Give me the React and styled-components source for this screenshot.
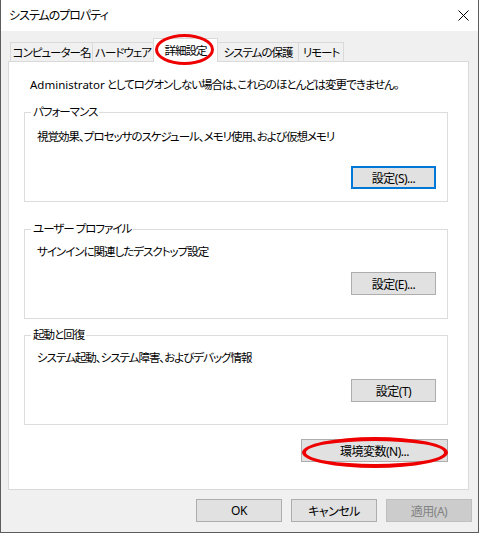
import styled, { createGlobalStyle, css } from 'styled-components';

const GlobalStyle = createGlobalStyle`
  body {
    margin: 0;
    background: #fff;
  }
`;

const uiFont = `"Noto Sans", "Noto Sans CJK JP", sans-serif`;

export default function App() {
  return (
    <>
      <GlobalStyle />
      <Window>
        <TitleBar>
          <Title>システムのプロパティ</Title>
          <CloseIcon />
        </TitleBar>
        <Body>
          <TabRow>
            <Tab $w={83}>コンピューター名</Tab>
            <Tab $w={62}>ハードウェア</Tab>
            <Tab $w={65} $active>
              詳細設定
              <Mark $left={1} $top={-5} $w={59} $h={31} $stroke={3} />
            </Tab>
            <Tab $w={82}>システムの保護</Tab>
            <Tab $w={46}>リモート</Tab>
          </TabRow>
          <Panel>
            <Intro>
              <Latin>Administrator</Latin> としてログオンしない場合は、これらのほとんどは変更できません。
            </Intro>
            <Group
              $mt={19}
              title="パフォーマンス"
              text="視覚効果、プロセッサのスケジュール、メモリ使用、および仮想メモリ"
              textTop={16}
              buttonTop={21}
              button={<Button $w={85} $focused>設定(S)...</Button>}
            />
            <Group
              $mt={27}
              title="ユーザー プロファイル"
              text="サインインに関連したデスクトップ設定"
              textTop={14}
              buttonTop={12}
              button={<Button $w={85}>設定(E)...</Button>}
            />
            <Group
              $mt={16}
              title="起動と回復"
              text="システム起動、システム障害、およびデバッグ情報"
              textTop={14}
              buttonTop={13}
              button={<Button $w={85}>設定(T)</Button>}
            />
            <EnvRow>
              <Button $w={147}>
                環境変数(N)...
                <Mark $left={0} $top={-3} $w={146} $h={31} $stroke={4} />
              </Button>
            </EnvRow>
          </Panel>
          <Footer>
            <Button $w={86}>OK</Button>
            <Button $w={86}>キャンセル</Button>
            <Button $w={86} disabled>適用(A)</Button>
          </Footer>
        </Body>
      </Window>
    </>
  );
}

function Group({ $mt, title, text, textTop, buttonTop, button }) {
  return (
    <GroupBox $mt={$mt}>
      <Legend>{title}</Legend>
      <GroupText $mt={textTop}>{text}</GroupText>
      <GroupActions $mt={buttonTop}>{button}</GroupActions>
    </GroupBox>
  );
}

function CloseIcon() {
  return (
    <svg width="11" height="11" viewBox="0 0 11 11">
      <path d="M0.5 0.5 L10.5 10.5 M10.5 0.5 L0.5 10.5" stroke="#000" strokeWidth="1" fill="none" />
    </svg>
  );
}

const Window = styled.div`
  width: 479px;
  height: 533px;
  box-sizing: border-box;
  border: 1px solid #5c5c5c;
  border-top: none;
  display: flex;
  flex-direction: column;
  font-family: ${uiFont};
  font-size: 11.5px;
  letter-spacing: -1px;
  color: #000;
  font-feature-settings: "palt";
`;

const TitleBar = styled.div`
  height: 31px;
  flex: none;
  background: #fff;
  display: flex;
  align-items: center;
  justify-content: space-between;
  padding: 0 9px 0 8px;
`;

const Title = styled.span`
  line-height: 16px;
  font-size: 12px;
`;

const Body = styled.div`
  flex: 1;
  background: #f0f0f0;
  padding: 7px 6px 0 7px;
  display: flex;
  flex-direction: column;
`;

const TabRow = styled.div`
  display: flex;
  align-items: flex-end;
  padding-left: 2px;
`;

const Tab = styled.div`
  position: relative;
  width: ${({ $w }) => $w}px;
  height: 19px;
  box-sizing: border-box;
  border: 1px solid #d9d9d9;
  border-bottom: none;
  background: #f0f0f0;
  display: flex;
  align-items: center;
  justify-content: center;
  white-space: nowrap;

  & + & {
    margin-left: -1px;
  }

  ${({ $active }) =>
    $active &&
    css`
      height: 24px;
      margin-bottom: -1px;
      padding-bottom: 2px;
      background: #fff;
      z-index: 1;
    `}
`;

const Mark = styled.span`
  position: absolute;
  left: ${({ $left }) => $left}px;
  top: ${({ $top }) => $top}px;
  width: ${({ $w }) => $w}px;
  height: ${({ $h }) => $h}px;
  box-sizing: border-box;
  border: ${({ $stroke }) => $stroke}px solid #ee0000;
  border-radius: 50%;
  pointer-events: none;
`;

const Panel = styled.div`
  width: 461px;
  height: 429px;
  box-sizing: border-box;
  background: #fff;
  border: 1px solid #d9d9d9;
  padding: 15px 0 0 15px;
  display: flex;
  flex-direction: column;
`;

const Intro = styled.div`
  margin-left: 6px;
  line-height: 16px;
  white-space: nowrap;
`;

const Latin = styled.span`
  letter-spacing: 0;
`;

const GroupBox = styled.div`
  position: relative;
  width: 424px;
  height: 90px;
  box-sizing: border-box;
  margin-top: ${({ $mt }) => $mt}px;
  border: 1px solid #dcdcdc;
  padding: 0 11px 0 12px;
  display: flex;
  flex-direction: column;
`;

const Legend = styled.span`
  position: absolute;
  left: 6px;
  top: -9px;
  padding: 0 2px;
  background: #fff;
  line-height: 16px;
`;

const GroupText = styled.div`
  margin-top: ${({ $mt }) => $mt}px;
  line-height: 16px;
  white-space: nowrap;
`;

const GroupActions = styled.div`
  margin-top: ${({ $mt }) => $mt}px;
  display: flex;
  justify-content: flex-end;
`;

const EnvRow = styled.div`
  width: 424px;
  margin-top: 14px;
  display: flex;
  justify-content: flex-end;
`;

const Footer = styled.div`
  margin-top: 9px;
  display: flex;
  justify-content: flex-end;
  gap: 9px;
`;

const Button = styled.button`
  position: relative;
  width: ${({ $w }) => $w}px;
  height: 23px;
  box-sizing: border-box;
  padding: 0;
  background: #e1e1e1;
  border: 1px solid #adadad;
  border-radius: 0;
  font-family: ${uiFont};
  font-size: 12px;
  letter-spacing: -0.5px;
  font-feature-settings: "palt";
  color: #000;
  white-space: nowrap;

  ${({ $focused }) =>
    $focused &&
    css`
      border: 2px solid #0078d7;
    `}

  &:disabled {
    background: #cccccc;
    border-color: #bfbfbf;
    color: #838383;
  }
`;
